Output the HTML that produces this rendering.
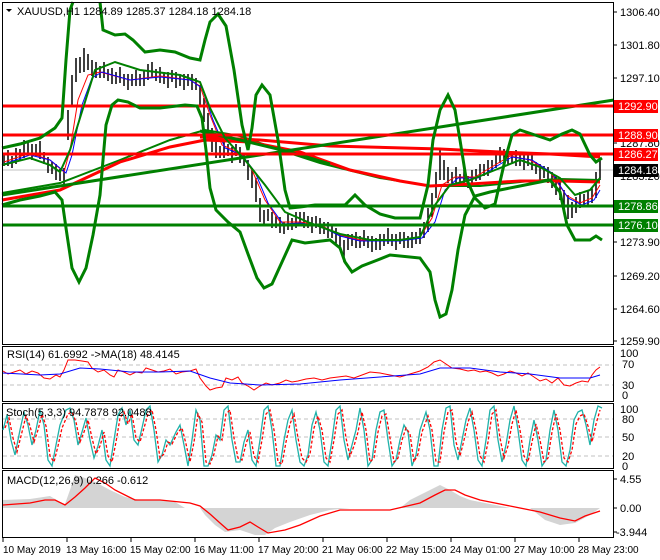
<!DOCTYPE html>
<html><head><meta charset="utf-8"><style>
html,body{margin:0;padding:0;background:#fff;}
svg{display:block;font-family:"Liberation Sans",sans-serif;}
</style></head><body>
<svg width="660" height="560" xmlns="http://www.w3.org/2000/svg">
<rect width="660" height="560" fill="#fff"/>
<line x1="2" y1="170" x2="614" y2="170" stroke="#c0c0c0" stroke-width="1"/>
<path stroke="#000" stroke-width="1.5" fill="none" d="M4 154V166M8 150V166M12 156V168M16 148V164M20 149V161M24 140V158M28 142V154M32 144V160M36 144V156M40 141V159M44 152V164M48 157V173M52 162V174M56 164V180M60 169V181M64 168V184M68 110V140M72 75V105M76 58V82M80 57V73M84 48V72M88 54V70M92 60V76M96 62V78M100 66V78M104 62V78M108 69V81M112 68V84M116 72V84M120 67V83M124 74V86M128 74V90M132 74V86M136 70V86M140 74V86M144 70V86M148 64V80M152 62V78M156 69V81M160 67V83M164 72V84M168 72V88M172 70V82M176 72V88M180 74V86M184 74V90M188 74V86M192 74V90M196 78V90M200 85V105M204 98V122M208 113V137M212 128V152M216 142V158M220 146V158M224 142V158M228 144V156M232 147V163M236 144V156M240 147V163M244 154V166M248 160V180M252 168V188M256 178V202M260 198V222M264 210V226M268 209V221M272 212V228M276 216V228M280 217V233M284 222V234M288 214V230M292 218V230M296 212V228M300 212V224M304 212V228M308 216V228M312 217V233M316 216V228M320 218V234M324 222V234M328 222V238M332 226V238M336 228V244M340 234V250M344 240V262M348 234V250M352 234V246M356 232V248M360 236V248M364 230V246M368 236V248M372 236V252M376 238V250M380 234V250M384 234V246M388 228V244M392 234V246M396 234V250M400 232V244M404 232V248M408 236V248M412 232V248M416 232V244M420 228V244M424 222V238M428 208V232M432 193V217M436 172V198M440 150V180M444 160V180M448 167V183M452 172V184M456 167V183M460 174V186M464 170V186M468 176V188M472 170V186M476 169V181M480 164V180M484 164V176M488 160V176M492 160V172M496 152V168M500 147V163M504 149V161M508 148V164M512 152V164M516 150V166M520 154V166M524 154V170M528 154V166M532 154V170M536 162V174M540 164V180M544 166V178M548 167V183M552 172V188M556 175V195M560 180V200M564 190V210M568 195V219M572 202V218M576 197V213M580 192V208M584 194V206M588 190V206M592 187V203M596 172V198M600 160V180"/>
<polyline fill="none" stroke="#ff0000" stroke-width="1" points="4,162 30,153 50,160 64,172 70,150 78,100 88,75 100,72 130,80 160,76 190,80 200,86 210,115 222,145 240,153 252,170 265,200 280,222 300,222 320,225 340,235 360,240 400,240 420,237 432,218 442,185 455,177 475,177 495,165 510,156 530,160 550,172 566,195 580,203 592,198 600,185"/>
<polyline fill="none" stroke="#0000ff" stroke-width="1" points="4,164 30,155 50,160 66,173 72,155 82,105 92,78 102,72 130,80 160,77 190,80 202,88 213,120 225,148 242,155 255,172 268,203 283,224 300,223 320,226 340,236 360,241 400,241 422,238 435,222 445,190 458,178 478,178 497,166 512,157 532,160 552,173 568,198 582,205 594,200 600,190"/>
<polyline fill="none" stroke="#008000" stroke-width="2" points="2,193 60,183 120,160 170,140 205,130 240,136 280,150 320,163 380,178 430,186 480,186 530,181 560,179 600,180"/>
<polyline fill="none" stroke="#ff0000" stroke-width="3" points="2,200 60,190 120,162 170,147 205,140 250,142 300,152 350,170 400,181 430,186 470,184 520,181 560,181 600,182"/>
<polyline fill="none" stroke="#ff0000" stroke-width="3" points="200,137 260,140 330,146 440,149 500,152 550,154 600,157"/>
<polyline fill="none" stroke="#008000" stroke-width="3" points="200,131 240,140 290,152 330,164"/>
<line x1="2" y1="195" x2="614" y2="100" stroke="#008000" stroke-width="3"/>
<line x1="2" y1="106" x2="614" y2="106" stroke="#ff0000" stroke-width="3"/>
<line x1="2" y1="135" x2="614" y2="135" stroke="#ff0000" stroke-width="3"/>
<line x1="2" y1="154" x2="614" y2="154" stroke="#ff0000" stroke-width="3"/>
<line x1="2" y1="206" x2="614" y2="206" stroke="#008000" stroke-width="3"/>
<line x1="2" y1="225" x2="614" y2="225" stroke="#008000" stroke-width="3"/>
<polyline fill="none" stroke="#008000" stroke-width="3" points="2,148 20,144 40,138 55,128 62,118 66,60 70,10 73,2"/>
<polyline fill="none" stroke="#008000" stroke-width="3" points="100,2 103,30 115,35 125,34 133,40 145,52 160,50 175,52 190,58 200,60 205,40 210,22 218,14 226,26 234,70 242,125 248,150 252,128 256,95 262,85 270,95 278,140 285,190 290,208 300,207 315,205 345,205 355,195 365,205 380,214 395,218 420,218 428,185 433,140 440,110 448,95 455,110 460,140 466,178 475,198 485,208 495,204 505,160 512,135 520,130 535,135 550,140 562,134 572,130 580,134 590,155 596,162 602,158"/>
<polyline fill="none" stroke="#008000" stroke-width="3" points="2,205 20,200 40,196 55,192 62,200 66,228 72,268 79,282 86,268 93,235 100,195 103,160 106,125 112,105 118,100 128,102 140,108 160,108 185,105 197,106 202,118 206,150 210,188 216,210 228,222 240,232 248,254 257,278 264,288 272,284 282,262 292,240 305,243 330,240 340,248 345,262 352,272 362,266 375,261 390,255 420,258 430,272 435,300 440,317 446,314 452,290 458,250 465,215 475,196 490,192 520,186 550,180 560,192 567,225 575,240 590,240 596,236 602,240"/>
<polyline fill="none" stroke="#008000" stroke-width="2" points="2,165 30,158 50,165 60,172 70,150 80,118 95,70 115,62 140,70 180,75 200,82 210,108 225,138 245,160 265,185 285,212 310,223 340,234 370,240 400,240 420,237 435,205 450,185 470,180 500,168 520,160 540,167 560,178 575,195 590,190 600,178"/>
<rect x="2.5" y="2.5" width="611" height="342" fill="none" stroke="#000"/>
<rect x="2.5" y="346.5" width="611" height="55" fill="none" stroke="#000"/>
<rect x="2.5" y="403.5" width="611" height="65" fill="none" stroke="#000"/>
<rect x="2.5" y="470.5" width="611" height="67" fill="none" stroke="#000"/>
<g stroke="#c0c0c0" stroke-dasharray="4,3">
<line x1="3" y1="365" x2="613" y2="365"/><line x1="3" y1="385" x2="613" y2="385"/>
<line x1="3" y1="419" x2="613" y2="419"/><line x1="3" y1="437" x2="613" y2="437"/><line x1="3" y1="456" x2="613" y2="456"/>
</g>
<polyline fill="none" stroke="#ff0000" stroke-width="1" points="3,371 8,374 14,372 20,370 26,374 32,371 38,373 44,378 50,379 56,375 60,377 64,370 68,360 75,360 82,361 88,362 92,368 98,372 104,370 110,375 114,377 118,370 124,372 130,375 136,372 142,373 146,368 152,370 158,372 164,371 170,369 176,374 182,372 190,371 196,369 200,378 206,386 210,390 216,388 222,387 226,378 232,380 238,377 242,383 248,386 254,390 260,386 266,383 272,385 280,383 286,380 292,382 298,381 306,379 314,378 322,380 330,378 338,377 346,376 354,378 362,375 370,372 380,373 390,375 400,377 410,374 420,371 428,367 434,362 440,360 446,364 452,368 460,369 468,371 474,370 480,372 486,371 492,373 498,376 504,374 510,371 516,373 522,376 528,373 534,377 540,381 546,379 552,383 558,378 564,385 570,386 576,383 582,381 588,382 592,375 596,370 600,367"/>
<polyline fill="none" stroke="#0000ff" stroke-width="1" points="3,373 40,375 60,374 80,368 100,369 130,372 160,372 190,371 210,378 230,383 260,385 300,384 340,380 380,377 420,374 440,368 470,368 500,372 530,374 560,378 590,378 600,375"/>
<polyline fill="none" stroke="#20b2aa" stroke-width="1.3" points="3,430 7,415 11,440 15,455 20,430 24,412 28,425 32,445 36,430 40,410 44,425 48,460 52,466 56,445 60,425 66,410 70,408 74,420 78,445 82,432 86,418 90,440 94,458 98,446 102,430 106,460 110,466 114,440 118,415 122,408 126,425 130,410 134,440 138,445 142,428 146,410 150,406 154,430 158,462 162,455 166,440 170,445 176,432 180,425 184,445 188,466 192,440 196,410 200,420 204,466 208,466 212,455 216,435 220,440 224,410 228,406 232,440 236,462 240,462 244,442 248,430 252,460 256,466 260,440 264,410 268,406 272,430 276,466 280,466 284,440 288,420 292,410 296,440 300,462 304,466 308,455 312,425 316,412 320,430 324,462 328,466 332,440 336,410 340,406 344,440 348,460 352,445 356,430 360,408 364,430 368,466 372,460 376,430 380,412 384,410 388,440 392,466 396,460 400,440 404,425 408,432 412,466 416,455 420,430 426,412 430,430 434,466 438,466 442,430 446,408 450,406 454,445 458,460 462,440 466,420 470,408 474,430 478,460 482,466 486,440 490,410 494,406 498,440 502,462 506,445 510,420 514,406 518,430 522,460 526,466 530,440 534,420 538,440 542,466 546,460 550,430 554,410 558,430 562,462 566,466 570,450 574,420 578,412 582,410 586,425 590,445 594,420 598,406 602,408"/>
<polyline fill="none" stroke="#ff0000" stroke-width="1.3" stroke-dasharray="3,2" points="5,428 9,418 13,438 17,452 22,432 26,416 30,426 34,442 38,430 42,414 46,426 50,456 54,462 58,446 62,428 68,414 72,412 76,422 80,442 84,432 88,420 92,438 96,454 100,446 104,432 108,456 112,462 116,442 120,418 124,412 128,424 132,414 136,438 140,442 144,428 148,414 152,410 156,430 160,458 164,454 168,442 172,444 178,432 182,428 186,444 190,462 194,442 198,414 202,422 206,462 210,464 214,454 218,436 222,440 226,414 230,410 234,438 238,458 242,460 246,444 250,432 254,456 258,462 262,440 266,414 270,410 274,430 278,462 282,464 286,442 290,424 294,414 298,438 302,458 306,462 310,454 314,428 318,416 322,430 326,458 330,462 334,440 338,414 342,410 346,438 350,456 354,446 358,432 362,412 366,430 370,462 374,458 378,432 382,416 386,414 390,438 394,462 398,458 402,440 406,428 410,434 414,462 418,454 422,432 428,416 432,430 436,462 440,462 444,432 448,412 452,410 456,442 460,456 464,440 468,422 472,412 476,430 480,456 484,462 488,442 492,414 496,410 500,438 504,458 508,446 512,424 516,410 520,430 524,456 528,462 532,442 536,424 540,440 544,462 548,458 552,432 556,414 560,430 564,458 568,462 572,450 576,424 580,416 584,414 588,426 592,442 596,424 600,410"/>
<polygon fill="#d4d4d4" points="3,508 3,500 30,499 50,496 60,502 65,504 70,490 75,475 85,478 95,482 110,490 125,497 140,500 160,500 175,502 185,508 200,508 205,515 215,525 225,532 240,530 255,535 265,535 275,528 290,522 310,515 330,510 350,508 400,508 410,500 420,495 430,490 440,485 450,490 460,496 470,500 490,504 510,508 530,508 545,520 560,525 575,523 590,515 600,508"/>
<polyline fill="none" stroke="#ff0000" stroke-width="1.3" points="3,505 30,503 45,500 55,500 65,505 75,497 85,488 95,478 105,483 115,490 125,495 135,500 160,500 190,503 200,506 210,514 220,523 228,530 240,527 250,522 258,527 268,533 285,530 300,525 320,516 340,510 360,510 390,510 420,503 435,495 445,490 455,490 465,495 480,500 510,506 540,512 560,518 575,521 585,516 600,511"/>
<polygon points="6,9 12,9 9,12" fill="#000"/>
<g font-size="11" fill="#000">
<text x="17" y="15">XAUUSD,H1  1284.89 1285.37 1284.18 1284.18</text>
<text x="7" y="358">RSI(14) 61.6992  -&gt;MA(18) 48.4145</text>
<text x="6" y="416">Stoch(5,3,3) 94.7878 92.0488</text>
<text x="7" y="484">MACD(12,26,9) 0.266 -0.612</text>
</g>
<g font-size="11" fill="#000">
<text x="620" y="16">1306.40</text><text x="620" y="49">1301.80</text><text x="620" y="82">1297.10</text>
<text x="620" y="147">1287.80</text><text x="620" y="180">1283.20</text>
<text x="620" y="246">1273.90</text><text x="620" y="280">1269.20</text><text x="620" y="313">1264.60</text><text x="620" y="345">1259.90</text>
<text x="620" y="357">100</text><text x="622" y="368">70</text><text x="622" y="389">30</text><text x="622" y="399">0</text>
<text x="620" y="413">100</text><text x="622" y="423">80</text><text x="622" y="441">50</text><text x="622" y="460">20</text><text x="622" y="470">0</text>
<text x="620" y="483">4.55</text><text x="620" y="512">0.00</text><text x="616" y="536">-3.944</text>
</g>
<g font-size="11">
<rect x="614" y="100" width="44" height="13" fill="#ff0000"/><text x="618" y="110" fill="#fff">1292.90</text>
<rect x="614" y="129" width="44" height="13" fill="#ff0000"/><text x="618" y="139" fill="#fff">1288.90</text>
<rect x="614" y="148" width="44" height="13" fill="#ff0000"/><text x="618" y="158" fill="#fff">1286.27</text>
<rect x="614" y="164" width="44" height="13" fill="#000"/><text x="618" y="174" fill="#fff">1284.18</text>
<rect x="614" y="200" width="44" height="13" fill="#008000"/><text x="618" y="210" fill="#fff">1278.86</text>
<rect x="614" y="219" width="44" height="13" fill="#008000"/><text x="618" y="229" fill="#fff">1276.10</text>
</g>
<g stroke="#000"><line x1="614" y1="12" x2="617" y2="12"/><line x1="614" y1="45" x2="617" y2="45"/><line x1="614" y1="78" x2="617" y2="78"/><line x1="614" y1="143" x2="617" y2="143"/><line x1="614" y1="176" x2="617" y2="176"/><line x1="614" y1="242" x2="617" y2="242"/><line x1="614" y1="276" x2="617" y2="276"/><line x1="614" y1="309" x2="617" y2="309"/><line x1="614" y1="341" x2="617" y2="341"/><line x1="614" y1="479" x2="617" y2="479"/><line x1="614" y1="508" x2="617" y2="508"/><line x1="614" y1="532" x2="617" y2="532"/></g>
<g font-size="10" fill="#000">
<text x="3" y="553">10 May 2019</text><text x="66" y="553">13 May 16:00</text><text x="130" y="553">15 May 02:00</text><text x="194" y="553">16 May 11:00</text><text x="258" y="553">17 May 20:00</text><text x="322" y="553">21 May 06:00</text><text x="386" y="553">22 May 15:00</text><text x="450" y="553">24 May 01:00</text><text x="514" y="553">27 May 10:00</text><text x="578" y="553">28 May 23:00</text>
</g>
<g stroke="#000"><line x1="3" y1="538" x2="3" y2="542"/><line x1="67" y1="538" x2="67" y2="542"/><line x1="131" y1="538" x2="131" y2="542"/><line x1="195" y1="538" x2="195" y2="542"/><line x1="259" y1="538" x2="259" y2="542"/><line x1="323" y1="538" x2="323" y2="542"/><line x1="387" y1="538" x2="387" y2="542"/><line x1="451" y1="538" x2="451" y2="542"/><line x1="515" y1="538" x2="515" y2="542"/><line x1="579" y1="538" x2="579" y2="542"/></g>
</svg>
</body></html>
